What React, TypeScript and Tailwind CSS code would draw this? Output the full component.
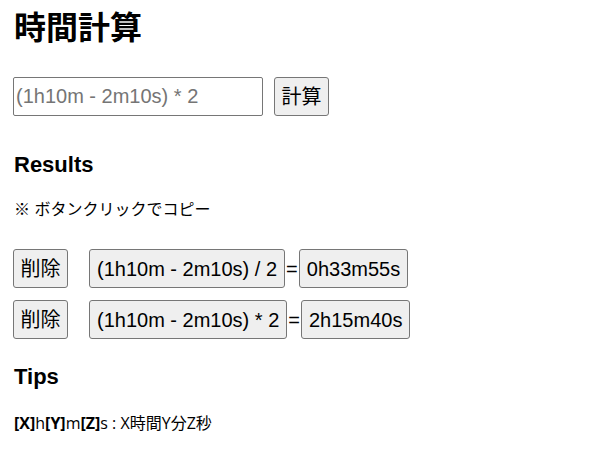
import { useState } from 'react';

type Result = { expr: string; value: string };

const initialResults: Result[] = [
    { expr: '(1h10m - 2m10s) / 2', value: '0h33m55s' },
    { expr: '(1h10m - 2m10s) * 2', value: '2h15m40s' },
];

const btn = 'h-[39px] px-[7px] bg-[#efefef] border border-[#767676] rounded-[3px] text-[20px] text-black leading-none';

export default function App() {
    const [input, setInput] = useState('');
    const [results, setResults] = useState<Result[]>(initialResults);

    return (
        <div className="min-h-screen bg-white text-black pl-[13px] pt-[8px] font-['Liberation_Sans','Noto_Sans_CJK_JP',sans-serif]">
            <h1 className="text-[32px] leading-[40px] font-bold pl-[1px]">時間計算</h1>

            <div className="flex items-center mt-[29px]">
                <input
                    value={input}
                    onChange={e => setInput(e.target.value)}
                    placeholder="(1h10m - 2m10s) * 2"
                    className="w-[250px] h-[39px] px-[2px] border border-[#767676] rounded-[2px] text-[20px] placeholder:text-[#757575] outline-none"
                />
                <button className={`${btn} ml-[11px] w-[55px] !px-0`}>計算</button>
            </div>

            <h2 className="mt-[35px] text-[22px] leading-[28px] font-bold pl-[1px]">Results</h2>
            <p className="mt-[19px] text-[16px] leading-[24px] pl-[1px]">※ ボタンクリックでコピー</p>

            <div className="mt-[27px] flex flex-col gap-[12px]">
                {results.map((r, i) => (
                    <div key={i} className="flex items-center">
                        <button onClick={() => setResults(results.filter((_, j) => j !== i))} className={`${btn} w-[55px] !px-0`}>削除</button>
                        <button className={`${btn} ml-[21px]`}>{r.expr}</button>
                        <span className="mx-[1px] text-[20px]">=</span>
                        <button className={btn}>{r.value}</button>
                    </div>
                ))}
            </div>

            <h2 className="mt-[24px] text-[22px] leading-[28px] font-bold pl-[1px]">Tips</h2>
            <p className="mt-[20px] text-[16px] leading-[24px] pl-[1px] font-['Open_Sans','Noto_Sans_CJK_JP',sans-serif]">
                <b>[X]</b>h<b>[Y]</b>m<b>[Z]</b>s : X時間Y分Z秒
            </p>
        </div>
    );
}
